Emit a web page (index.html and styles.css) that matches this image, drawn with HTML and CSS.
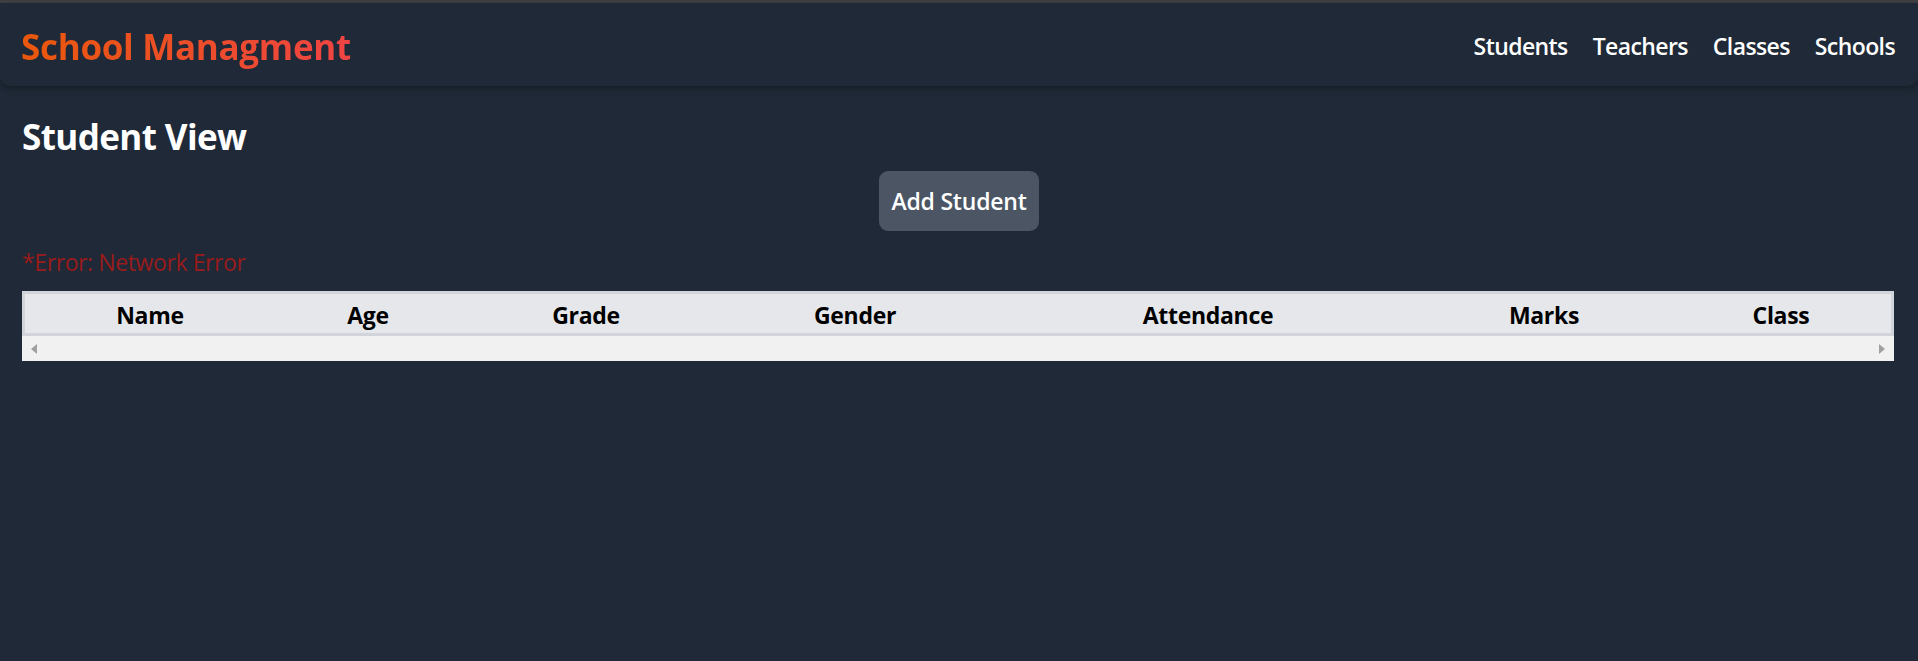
FILE: index.html
```html
<!DOCTYPE html>
<html lang="en">
<head>
<meta charset="utf-8">
<title>School Managment</title>
<link rel="stylesheet" href="styles.css">
</head>
<body>
<div class="topstrip"></div>
<header class="navbar">
  <div class="brand">School Managment</div>
  <nav class="nav">
    <a href="#">Students</a>
    <a href="#">Teachers</a>
    <a href="#">Classes</a>
    <a href="#">Schools</a>
  </nav>
</header>
<main class="page">
  <h2 class="page-title">Student View</h2>
  <div class="actions">
    <button class="btn">Add Student</button>
  </div>
  <p class="error">*Error: Network Error</p>
  <div class="table-wrap">
    <table class="grid">
      <colgroup>
        <col class="c-name"><col class="c-age"><col class="c-grade"><col class="c-gender"><col class="c-att"><col class="c-marks"><col class="c-class">
      </colgroup>
      <thead>
        <tr>
          <th>Name</th><th>Age</th><th>Grade</th><th>Gender</th><th>Attendance</th><th>Marks</th><th>Class</th>
        </tr>
      </thead>
    </table>
    <div class="hscroll">
      <span class="arrow arrow-left"></span>
      <span class="arrow arrow-right"></span>
    </div>
  </div>
</main>
</body>
</html>
```

FILE: styles.css
```css
html, body {
  margin: 0;
  padding: 0;
}
body {
  background: #1f2937;
  font-family: "Open Sans", "Noto Sans", sans-serif;
  color: #ffffff;
  min-height: 661px;
}
.topstrip {
  height: 3px;
  background: #3d3f42;
}
.navbar {
  height: 83px;
  box-sizing: border-box;
  padding: 0 23px 0 21px;
  display: flex;
  align-items: center;
  justify-content: space-between;
  background: #1f2937;
  border-radius: 0 0 10px 10px;
  box-shadow: 0 3px 6px rgba(0, 0, 0, 0.28);
  position: relative;
}
.brand {
  font-size: 35px;
  font-weight: 700;
  line-height: 45px;
  letter-spacing: -0.3px;
  background: linear-gradient(90deg, #ea580c, #ef4444);
  -webkit-background-clip: text;
  background-clip: text;
  color: transparent;
  margin-top: 4px;
}
.nav {
  display: flex;
  gap: 25px;
  margin-top: 4px;
}
.nav a {
  color: #ffffff;
  text-decoration: none;
  font-size: 23px;
  font-weight: 600;
  line-height: 35px;
  letter-spacing: -0.6px;
}
.page {
  padding: 28px 24px 0 22px;
}
.page-title {
  margin: 0;
  font-size: 35px;
  font-weight: 700;
  line-height: 45px;
  letter-spacing: -0.6px;
}
.actions {
  display: flex;
  justify-content: center;
  margin-top: 12px;
  padding-left: 2px;
}
.btn {
  width: 160px;
  height: 60px;
  background: #4b5563;
  color: #ffffff;
  border: none;
  border-radius: 9px;
  font-family: inherit;
  font-size: 23px;
  font-weight: 600;
  letter-spacing: -0.2px;
  padding: 0;
}
.error {
  margin: 14px 0 0 0;
  font-size: 23px;
  line-height: 35px;
  color: #991b1b;
  letter-spacing: -0.4px;
}
.table-wrap {
  margin-top: 11px;
}
.grid {
  width: 100%;
  border-collapse: separate;
  border-spacing: 0;
  table-layout: fixed;
  border: 3px solid #d1d5db;
  border-bottom: none;
  background: #e5e7eb;
}
.grid th {
  color: #000000;
  font-size: 23px;
  font-weight: 700;
  line-height: 35px;
  letter-spacing: -0.3px;
  padding: 4px 0 0 0;
  text-align: center;
  border-bottom: 3px solid #d1d5db;
}
.c-name { width: 250px; }
.c-age { width: 186px; }
.c-grade { width: 250px; }
.c-gender { width: 288px; }
.c-att { width: 418px; }
.c-marks { width: 254px; }
.c-class { width: 220px; }
.hscroll {
  height: 25px;
  background: #f1f1f1;
  display: flex;
  align-items: center;
  justify-content: space-between;
  padding: 0 9px;
}
.arrow {
  width: 0;
  height: 0;
  border-top: 5.5px solid transparent;
  border-bottom: 5.5px solid transparent;
}
.arrow-left {
  border-right: 6px solid #a0a0a0;
}
.arrow-right {
  border-left: 6px solid #a0a0a0;
}
```
